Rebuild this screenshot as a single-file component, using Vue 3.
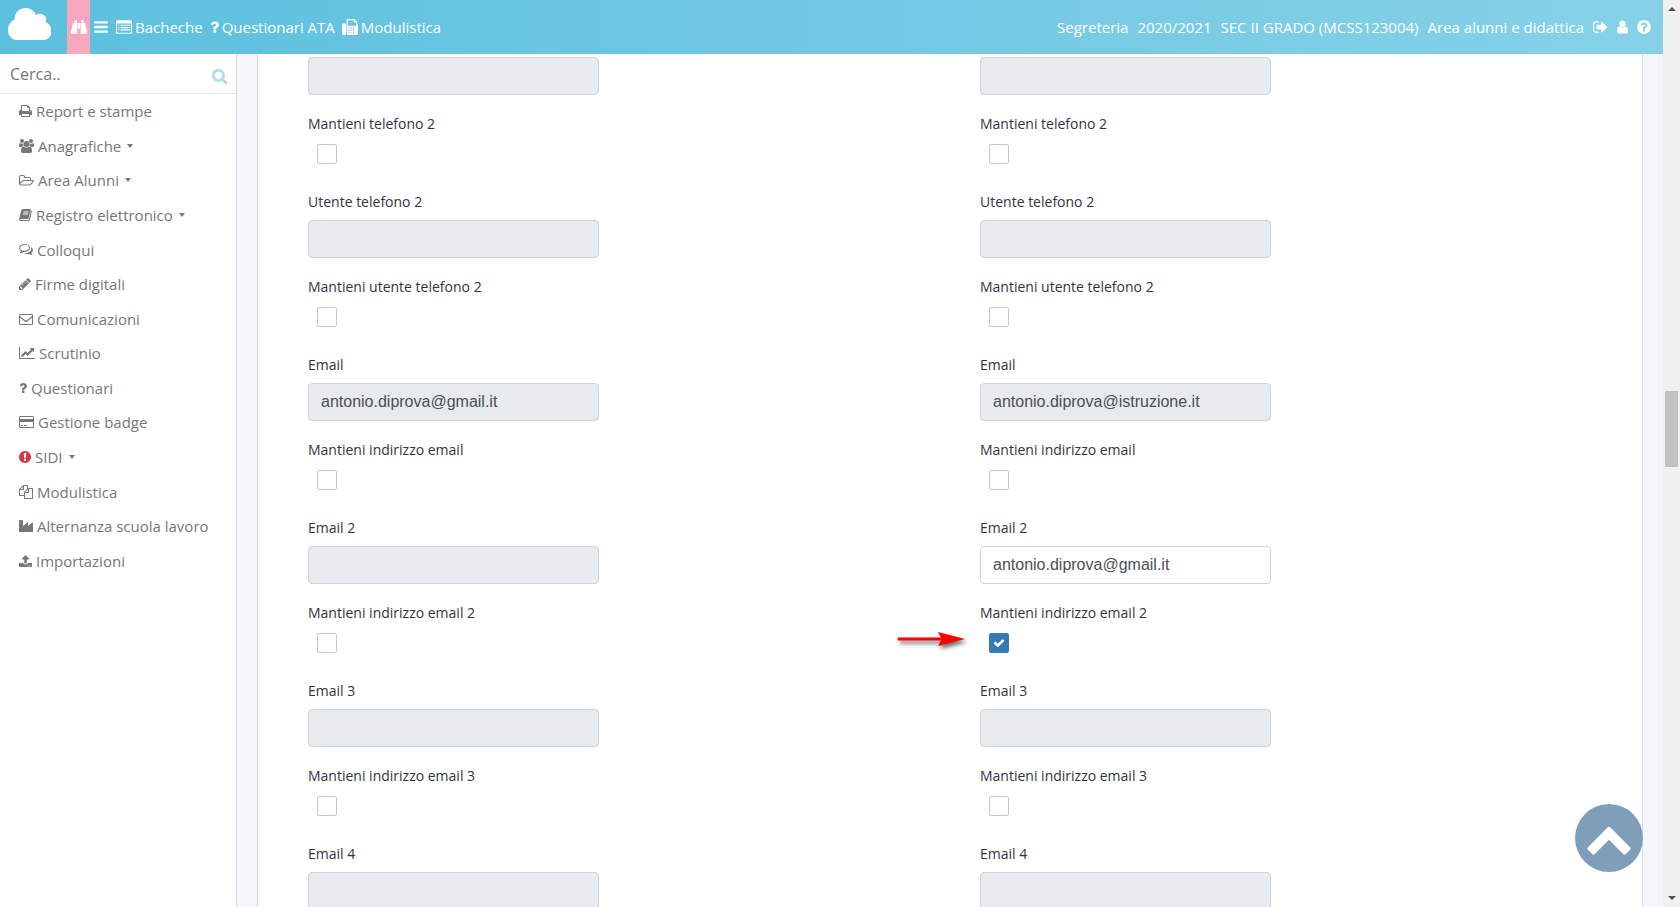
<template>
  <div class="app">
    <div class="page">
      <header class="topbar">
        <nav class="topbar-left">
          <a href="#" class="logo" aria-label="Home">
            <svg viewBox="0 0 43 32"><path d="M9 32C3.500 32 0 27.500 0 22C0 17 2.500 13.500 6.500 11.500C6.500 5 11 0 17.500 0C22 0 26 2.500 28 7C30 5.500 32.500 5.500 35 6.500C38 8 39 11 37.500 14C41 15.500 43.500 19 43.500 23C43.500 28 40 32 35 32Z" /></svg>
          </a>
          <button type="button" class="icon-button pink" aria-label="Cerca">
            <svg class="icon" :viewBox="icons.binoculars.box" :style="iconWidth('binoculars', 16)"><path :d="icons.binoculars.d" /></svg>
          </button>
          <button type="button" class="icon-button burger" aria-label="Menu">
            <svg class="icon" :viewBox="icons.bars.box" :style="iconWidth('bars', 16)"><path :d="icons.bars.d" /></svg>
          </button>
          <a v-for="link in topLinks" :key="link.text" href="#" class="top-link">
            <svg class="icon" :viewBox="icons[link.icon].box" :style="iconWidth(link.icon, 16)"><path fill-rule="evenodd" :d="icons[link.icon].d" /></svg>
            <span>{{ link.text }}</span>
          </a>
        </nav>
        <div class="topbar-right">
          <a v-for="item in session" :key="item" href="#">{{ item }}</a>
          <a v-for="item in sessionIcons" :key="item.icon" href="#" :aria-label="item.name">
            <svg class="icon" :viewBox="icons[item.icon].box" :style="iconWidth(item.icon, 16)"><path fill-rule="evenodd" :d="icons[item.icon].d" /></svg>
          </a>
        </div>
      </header>

      <div class="body">
        <aside class="sidebar">
          <form class="search" @submit.prevent>
            <input v-model="query" type="text" placeholder="Cerca.." aria-label="Cerca">
            <button type="submit" aria-label="Avvia ricerca">
              <svg class="icon" :viewBox="icons.search.box" :style="iconWidth('search', 16)"><path fill-rule="evenodd" :d="icons.search.d" /></svg>
            </button>
          </form>
          <ul class="menu">
            <li v-for="item in menu" :key="item.text">
              <a href="#">
                <svg class="icon" :class="{ alert: item.alert }" :viewBox="icons[item.icon].box" :style="iconWidth(item.icon, 14)"><path fill-rule="evenodd" :d="icons[item.icon].d" /></svg>
                <span>{{ item.text }}</span>
                <i v-if="item.open" class="caret"></i>
              </a>
            </li>
          </ul>
        </aside>

        <main class="content">
          <div class="card">
            <section v-for="(person, p) in people" :key="p" class="person">
              <div v-for="(field, i) in person" :key="field.label" class="field">
                <label v-if="i > 0" class="name" :for="`value-${p}-${i}`">{{ field.label }}</label>
                <input
                  :id="`value-${p}-${i}`"
                  v-model="field.value"
                  type="text"
                  class="form-control"
                  :aria-label="field.label"
                  :disabled="!field.keep"
                >
                <template v-if="field.keepLabel">
                  <label class="keep" :for="`keep-${p}-${i}`">{{ field.keepLabel }}</label>
                  <div class="check">
                    <input :id="`keep-${p}-${i}`" v-model="field.keep" type="checkbox">
                    <svg v-if="field.keep" class="tick" :viewBox="icons.check.box"><path :d="icons.check.d" /></svg>
                    <svg v-if="field.keep" class="arrow" viewBox="0 0 68 16"><path d="M1 6.500H44L41 1L68 8L41 15L44 9.500H1Q0 8 1 6.500Z" /></svg>
                  </div>
                </template>
              </div>
            </section>
          </div>
        </main>
      </div>

      <button type="button" class="to-top" aria-label="Torna su">
        <svg :viewBox="icons.chevronUp.box"><path :d="icons.chevronUp.d" /></svg>
      </button>
    </div>

    <div class="scrollbar">
      <i class="step up"></i>
      <div class="track">
        <div class="thumb"></div>
      </div>
      <i class="step down"></i>
    </div>
  </div>
</template>

<script setup>
import { ref } from 'vue'

const query = ref('')

const topLinks = [
  { icon: 'listAlt', text: 'Bacheche' },
  { icon: 'question', text: 'Questionari ATA' },
  { icon: 'fax', text: 'Modulistica' },
]

const session = ['Segreteria', '2020/2021', 'SEC II GRADO (MCSS123004)', 'Area alunni e didattica']

const sessionIcons = [
  { icon: 'signOut', name: 'Esci' },
  { icon: 'user', name: 'Profilo' },
  { icon: 'questionCircle', name: 'Aiuto' },
]

const menu = [
  { icon: 'print', text: 'Report e stampe' },
  { icon: 'users', text: 'Anagrafiche', open: true },
  { icon: 'folder', text: 'Area Alunni', open: true },
  { icon: 'book', text: 'Registro elettronico', open: true },
  { icon: 'comments', text: 'Colloqui' },
  { icon: 'pencil', text: 'Firme digitali' },
  { icon: 'envelope', text: 'Comunicazioni' },
  { icon: 'chart', text: 'Scrutinio' },
  { icon: 'question', text: 'Questionari' },
  { icon: 'card', text: 'Gestione badge' },
  { icon: 'exclamation', text: 'SIDI', open: true, alert: true },
  { icon: 'files', text: 'Modulistica' },
  { icon: 'industry', text: 'Alternanza scuola lavoro' },
  { icon: 'upload', text: 'Importazioni' },
]

function buildFields(values, kept) {
  return [
    ['Telefono 2', 'Mantieni telefono 2'],
    ['Utente telefono 2', 'Mantieni utente telefono 2'],
    ['Email', 'Mantieni indirizzo email'],
    ['Email 2', 'Mantieni indirizzo email 2'],
    ['Email 3', 'Mantieni indirizzo email 3'],
    ['Email 4', ''],
  ].map(([label, keepLabel]) => ({
    label,
    keepLabel,
    value: values[label] || '',
    keep: label === kept,
  }))
}

const people = ref([
  buildFields({ Email: 'antonio.diprova@gmail.it' }),
  buildFields({ Email: 'antonio.diprova@istruzione.it', 'Email 2': 'antonio.diprova@gmail.it' }, 'Email 2'),
])

// every glyph is drawn on an em of 1792 units, w is its own width
function glyph(w, d, x = 0) {
  return { w, d, box: `${x} 0 ${w} 1792` }
}

function iconWidth(name, size) {
  return { width: `${Math.round(icons[name].w / 1792 * size)}px`, height: `${size}px` }
}

const icons = {
  bars: glyph(1536, 'M1664 1344v128q0 26-19 45t-45 19h-1408q-26 0-45-19t-19-45v-128q0-26 19-45t45-19h1408q26 0 45 19t19 45zm0-512v128q0 26-19 45t-45 19h-1408q-26 0-45-19t-19-45v-128q0-26 19-45t45-19h1408q26 0 45 19t19 45zm0-512v128q0 26-19 45t-45 19h-1408q-26 0-45-19t-19-45v-128q0-26 19-45t45-19h1408q26 0 45 19t19 45z', 128),
  binoculars: glyph(1792, 'M704 448v1152q0 64-64 64h-576q-64 0-64-64v-256l208-800q24-96 112-96zM1088 448v1152q0 64 64 64h576q64 0 64-64v-256l-208-800q-24-96-112-96zM768 448h256v640h-256zM352 128h320v256h-320zM1120 128h320v256h-320z'),
  listAlt: glyph(1792, 'M160 128h1472q160 0 160 160v1216q0 160-160 160h-1472q-160 0-160-160v-1216q0-160 160-160zM128 512v992q0 32 32 32h1472q32 0 32-32v-992zM256 640h128v128h-128zM512 640h1024v128h-1024zM256 896h128v128h-128zM512 896h1024v128h-1024zM256 1152h128v128h-128zM512 1152h1024v128h-1024z'),
  fax: glyph(1792, 'M96 512h256q96 0 96 96v1056q0 128-128 128h-192q-128 0-128-128v-1056q0-96 96-96zM640 0h704q64 0 112 48l208 208q48 48 48 112v240q80 48 80 160v896q0 128-128 128h-1024q-128 0-128-128v-1536q0-128 128-128zM640 128v640h960v-384h-288v-256zM704 960v128h128v-128zM960 960v128h128v-128zM1216 960v128h128v-128zM704 1216v128h128v-128zM960 1216v128h128v-128zM1216 1216v128h128v-128zM704 1472v128h128v-128zM960 1472v128h128v-128zM1216 1472v128h128v-128z'),
  question: glyph(1024, 'M1088 1256v240q0 16-12 28t-28 12h-240q-16 0-28-12t-12-28v-240q0-16 12-28t28-12h240q16 0 28 12t12 28zm316-600q0 54-15.500 101t-35 76.500-55 59.500-57.500 43.500-61 35.500q-41 23-68.500 65t-27.500 67q0 17-12 32.500t-28 15.500h-240q-15 0-25.500-18.500t-10.500-37.500v-45q0-83 65-156.500t143-108.500q59-27 84-56t25-76q0-42-46.500-74t-107.500-32q-65 0-108 29-35 25-107 115-13 16-31 16-12 0-25-8l-164-125q-13-10-15.500-25t5.500-28q160-266 464-266 80 0 161 31t146 83 106 127.500 41 158.500z', 384),
  signOut: glyph(1664, 'M704 1440q0 4 1 20t.5 26.500-3 23.500-10 19.500-20.500 6.500h-320q-119 0-203.500-84.500t-84.500-203.500v-704q0-119 84.500-203.500t203.500-84.500h320q13 0 22.500 9.500t9.500 22.500q0 4 1 20t.5 26.500-3 23.500-10 19.500-20.500 6.500h-320q-66 0-113 47t-47 113v704q0 66 47 113t113 47h312l11.500 1 11.500 3 8 5.500 7 9 2 13.500zm928-544q0 26-19 45l-544 544q-19 19-45 19t-45-19-19-45v-288h-448q-26 0-45-19t-19-45v-384q0-26 19-45t45-19h448v-288q0-26 19-45t45-19 45 19l544 544q19 19 19 45z', 64),
  user: glyph(1280, 'M1536 1399q0 109-62.500 187t-150.500 78h-854q-88 0-150.500-78t-62.500-187q0-85 8.500-160.500t31.500-152 58.500-131 94-89 134.500-34.500q131 128 313 128t313-128q76 0 134.500 34.500t94 89 58.500 131 31.500 152 8.500 160.500zm-256-887q0 159-112.500 271.500t-271.500 112.500-271.500-112.500-112.500-271.500 112.500-271.500 271.500-112.500 271.500 112.500 112.500 271.500z', 256),
  questionCircle: glyph(1536, 'M1024 1376v-192q0-14-9-23t-23-9h-192q-14 0-23 9t-9 23v192q0 14 9 23t23 9h192q14 0 23-9t9-23zm256-672q0-88-55.500-163t-138.500-116-170-41q-243 0-371 213-15 24 8 42l132 100q7 6 19 6 16 0 25-12 53-68 86-92 34-24 86-24 48 0 85.500 26t37.500 59q0 38-20 61t-68 45q-63 28-115.500 86.500t-52.500 125.500v36q0 14 9 23t23 9h192q14 0 23-9t9-23q0-19 21.500-49.500t54.500-49.500q32-18 49-28.500t46-35 44.500-48 28-60.500 12.500-81zm384 192q0 209-103 385.500t-279.500 279.500-385.500 103-385.500-103-279.500-279.500-103-385.500 103-385.500 279.500-279.500 385.500-103 385.500 103 279.500 279.500 103 385.500z', 128),
  search: glyph(1664, 'M1216 832q0-185-131.500-316.500t-316.500-131.500-316.500 131.500-131.500 316.500 131.500 316.500 316.500 131.500 316.500-131.500 131.500-316.500zm512 832q0 52-38 90t-90 38q-54 0-90-38l-343-342q-179 124-399 124-143 0-273.500-55.500t-225-150-150-225-55.500-273.500 55.500-273.500 150-225 225-150 273.500-55.500 273.500 55.500 225 150 150 225 55.500 273.500q0 220-124 399l343 343q37 37 37 90z', 64),
  print: glyph(1664, 'M448 1536h896v-256h-896v256zm0-640h896v-384h-160q-40 0-68-28t-28-68v-160h-640v640zm1152 64q0-26-19-45t-45-19-45 19-19 45 19 45 45 19 45-19 19-45zm128 0v416q0 13-9.500 22.500t-22.500 9.500h-224v160q0 40-28 68t-68 28h-960q-40 0-68-28t-28-68v-160h-224q-13 0-22.500-9.500t-9.500-22.500v-416q0-79 56.500-135.500t135.500-56.500h64v-544q0-40 28-68t68-28h672q40 0 88 20t76 48l152 152q28 28 48 76t20 88v256h64q79 0 135.500 56.500t56.500 135.500z', 64),
  users: glyph(1920, 'M593 896q-162 5-265 128h-134q-82 0-138-40.500t-56-118.500q0-353 124-353 6 0 43.500 21t97.500 42.500 119 21.500q67 0 133-23-5 37-5 66 0 139 81 256zM1664 1533q0 120-73 189.500t-194 69.500h-874q-121 0-194-69.500t-73-189.500q0-53 3.500-103.500t14-109 26.500-108.500 43-97.500 62-81 85.500-53.500 111.500-20q10 0 43 21.500t73 48 107 48 135 21.500 135-21.500 107-48 73-48 43-21.500q61 0 111.500 20t85.500 53.500 62 81 43 97.500 26.500 108.500 14 109 3.500 103.500zM640 256a256 256 0 1 1-512 0a256 256 0 1 1 512 0zM1344 640a384 384 0 1 1-768 0a384 384 0 1 1 768 0zM1920 865q0 78-56 118.500t-138 40.500h-134q-103-123-265-128 81-117 81-256 0-29-5-66 66 23 133 23 59 0 119-21.500t97.500-42.500 43.500-21q124 0 124 353zM1792 256a256 256 0 1 1-512 0a256 256 0 1 1 512 0z'),
  folder: glyph(1920, 'M224 256h320q224 0 224 224v32h544q224 0 224 224v160h256q128 0 128 96 0 48-40 96l-336 400q-96 112-256 112h-1056q-232 0-232-224v-896q0-224 224-224zM128 1256l264-264q100-96 248-96h768v-160q0-96-96-96h-672v-160q0-96-96-96h-320q-96 0-96 96zM512 1068l-340 328q-44 76 60 76h1056q96 0 160-72l318-376h-1126q-76 0-128 44z'),
  book: glyph(1664, 'M480 128h944q112 0 72 136l-248 1008q-40 136-176 136h-832q-104 0-104 72 0 56 104 56h912q88 0 112-88l244-1016q24-80 4-136 176 48 120 228l-232 972q-48 168-224 168h-932q-160 0-216-144-48-120 32-320l208-864q48-208 212-208zM584 448l-32 128h640l32-128zM520 704l-32 128h640l32-128z'),
  comments: glyph(1792, 'M704 128q292 0 498 148t206 364-206 364-498 148q-92 0-176-14-152 108-352 136-48 0-60-36-8-32 24-64 88-88 108-156-248-152-248-378 0-216 206-364t498-148zM704 256q-240 0-408 112t-168 272q0 168 208 280l64 36-40 100q64-36 108-70l40-30q92 20 196 20 240 0 408-112t168-272-168-272-408-112zM1528 552q264 140 264 376 0 220-232 360 20 72 108 160 36 40 16 72-24 36-80 20-180-36-312-128-96 14-176 14-280 0-480-136 500 20 752-192 252-212 140-546z'),
  pencil: glyph(1536, 'M491 1536l91-91-235-235-91 91v107h128v128h107zm523-928q0-22-22-22-10 0-17 7l-542 542q-7 7-7 17 0 22 22 22 10 0 17-7l542-542q7-7 7-17zm-54-192l416 416-832 832h-416v-416zm683 96q0 53-37 90l-166 166-416-416 166-165q36-38 90-38 53 0 91 38l235 234q37 39 37 91z', 128),
  envelope: glyph(1792, 'M160 256h1472q160 0 160 160v1088q0 160-160 160h-1472q-160 0-160-160v-1088q0-160 160-160zM128 736v768q0 32 32 32h1472q32 0 32-32v-768l-512 420q-128 116-256 116t-256-116zM128 416q0 104 96 184l480 380q112 92 192 92t192-92l480-380q96-80 96-184 0-32-32-32h-1472q-32 0-32 32z'),
  chart: glyph(2048, 'M2048 1536v128h-2048v-1536h128v1408h1920zm-128-1248v435q0 21-19.500 29.500t-35.500-7.500l-121-121-633 633q-10 10-23 10t-23-10l-233-233-416 416-192-192 585-585q10-10 23-10t23 10l233 233 464-464-121-121q-16-16-7.500-35.500t29.500-19.500h435q14 0 23 9t9 23z'),
  card: glyph(1920, 'M160 128h1600q160 0 160 160v1216q0 160-160 160h-1600q-160 0-160-160v-1216q0-160 160-160zM160 256q-32 0-32 32v224h1664v-224q0-32-32-32zM128 896v608q0 32 32 32h1600q32 0 32-32v-608zM256 1280h256v128h-256zM640 1280h384v128h-384z'),
  exclamation: glyph(1536, 'M896 128q209 0 385.500 103t279.500 279.500 103 385.500-103 385.500-279.500 279.500-385.500 103-385.500-103-279.500-279.500-103-385.500 103-385.500 279.500-279.500 385.500-103zm128 1247v-190q0-14-9-23.500t-22-9.500h-192q-13 0-23 10t-10 23v190q0 13 10 23t23 10h192q13 0 22-9.500t9-23.500zm-2-344l18-621q0-12-10-18-10-8-24-8h-220q-14 0-24 8-10 6-10 18l17 621q0 10 10 17.500t24 7.500h185q14 0 23.500-7.500t10.500-17.500z', 128),
  files: glyph(1792, 'M1696 384q40 0 68 28t28 68v1216q0 40-28 68t-68 28h-960q-40 0-68-28t-28-68v-288h-544q-40 0-68-28t-28-68v-672q0-40 20-88t48-76l408-408q28-28 76-48t88-20h416q40 0 68 28t28 68v328q68-40 128-40zM1152 597l-299 299h299zM512 213l-299 299h299zM708 860l316-316v-416h-384v416q0 40-28 68t-68 28h-416v640h512v-256q0-40 20-88t48-76zM1664 1664v-1152h-384v416q0 40-28 68t-68 28h-416v640z'),
  industry: glyph(1792, 'M448 128q64 0 64 64v704l584-436q56-28 56 40v396l540-436q100-36 100 52v1152h-1792v-1472q0-64 64-64z'),
  upload: glyph(1664, 'M832 128l480 480q48 96-64 96h-256v448q0 64-64 64h-192q-64 0-64-64v-448h-256q-112 0-64-96zM96 1152h428q64 192 308 192t308-192h428q96 0 96 96v320q0 96-96 96h-1472q-96 0-96-96v-320q0-96 96-96zM1088 1472v128h128v-128zM1344 1472v128h128v-128z'),
  check: glyph(1792, 'M1671 566q0 40-28 68l-724 724-136 136q-28 28-68 28t-68-28l-136-136-362-362q-28-28-28-68t28-68l136-136q28-28 68-28t68 28l294 295 656-657q28-28 68-28t68 28l136 136q28 28 28 68z'),
  chevronUp: glyph(1792, 'M1683 1331l-166 165q-19 19-45 19t-45-19l-531-531-531 531q-19 19-45 19t-45-19l-166-165q-19-19-19-45.500t19-45.500l742-741q19-19 45-19t45 19l742 741q19 19 19 45.500t-19 45.500z'),
}
</script>

<style>
body {
  margin: 0;
  overflow: hidden;
}
</style>

<style scoped>
* {
  box-sizing: border-box;
}

.app {
  display: flex;
  height: 100vh;
  overflow: hidden;
  font-family: "Open Sans", "Noto Sans", sans-serif;
  font-size: 14px;
  color: #303442;
}

.page {
  flex: 1;
  min-width: 0;
  display: flex;
  flex-direction: column;
}

a {
  color: inherit;
  text-decoration: none;
}

button {
  padding: 0;
  border: none;
  background: none;
  color: inherit;
  cursor: pointer;
}

svg {
  display: block;
  fill: currentColor;
}

.icon {
  flex: none;
}

/* top bar */
.topbar {
  flex: none;
  height: 54px;
  display: flex;
  justify-content: space-between;
  background: linear-gradient(90deg, #5bc0de, #86d1e8);
  color: #fff;
  font-size: 15px;
  white-space: nowrap;
}

.topbar-left,
.topbar-right {
  display: flex;
  align-items: center;
}

.logo {
  margin: 0 16px 6px 8px;
}

.logo svg {
  width: 43px;
  height: 32px;
}

.pink {
  align-self: stretch;
  display: flex;
  align-items: center;
  width: 23px;
  justify-content: center;
  background: #f8a8be;
}

.burger {
  margin: 0 1px 0 4px;
}

.top-link {
  display: flex;
  align-items: center;
  gap: 3px;
  margin-left: 7px;
}

.topbar-right {
  gap: 9px;
  padding-right: 12px;
}

/* sidebar */
.body {
  flex: 1;
  min-height: 0;
  display: flex;
}

.sidebar {
  flex: none;
  width: 237px;
  border-right: 1px solid #d9dbde;
  background: #fff;
  color: #777;
}

.search {
  display: flex;
  align-items: center;
  height: 40px;
  padding: 0 9px 0 10px;
  border-bottom: 1px solid #e2e4e6;
}

.search input {
  flex: 1;
  min-width: 0;
  padding: 0;
  border: none;
  outline: none;
  font-family: inherit;
  font-size: 16px;
  color: #777;
}

.search input::placeholder {
  color: #777;
}

.search button {
  margin-top: 4px;
  color: #a9deee;
}

.search svg {
  stroke: currentColor;
  stroke-width: 60;
}

.menu {
  display: grid;
  grid-auto-rows: 1fr;
  height: 484px;
  margin: 0;
  padding: 0 0 0 19px;
  list-style: none;
  font-size: 15px;
}

.menu li,
.menu a {
  display: flex;
  align-items: center;
}

.menu a {
  gap: 4px;
}

.menu .alert {
  color: #dc3545;
}

.caret {
  margin-left: 2px;
  border: 3px solid transparent;
  border-top: 4px solid #777;
  border-bottom: 0;
}

/* form */
.content {
  flex: 1;
  min-width: 0;
  padding: 0 20px;
  background: #f5f6fb;
  overflow: hidden;
}

.card {
  display: flex;
  min-height: 100%;
  padding: 3px 20px 0;
  border: 1px solid #dcdee0;
  border-width: 0 1px;
  background: #fff;
}

.person {
  flex: 1;
  padding: 0 30px;
}

.field {
  padding-bottom: 27px;
}

.field label {
  display: block;
  line-height: 21px;
  font-weight: 500;
}

.name {
  margin-bottom: 8px;
}

.form-control {
  display: block;
  width: calc(50% - 15px);
  height: 38px;
  padding: 0 12px;
  border: 1px solid #ced4da;
  border-radius: 4px;
  background: #fff;
  font-family: "Liberation Sans", Arial, sans-serif;
  font-size: 16px;
  color: #495057;
}

.form-control:disabled {
  background: #e7ebee;
}

.keep {
  margin: 18px 0 10px;
}

.check {
  position: relative;
  width: 20px;
  height: 20px;
  margin-left: 9px;
}

.check input {
  appearance: none;
  display: block;
  width: 20px;
  height: 20px;
  margin: 0;
  border: 1px solid #c8c8c8;
  border-radius: 2px;
  background: #fff;
}

.check input:checked {
  border-color: #337ab7;
  background: #337ab7;
}

.tick {
  position: absolute;
  top: 4px;
  left: 4px;
  width: 12px;
  height: 12px;
  color: #fff;
  pointer-events: none;
}

.arrow {
  position: absolute;
  top: -2px;
  right: 44px;
  width: 68px;
  height: 16px;
  color: #f00;
  overflow: visible;
  filter: drop-shadow(2px 3px 2px rgba(0, 0, 0, 0.6));
}

.to-top {
  position: fixed;
  right: 37px;
  bottom: 35px;
  display: flex;
  align-items: center;
  justify-content: center;
  width: 68px;
  height: 68px;
  border-radius: 50%;
  background: #7f9fb9;
  color: #fff;
}

.to-top svg {
  width: 48px;
  height: 48px;
}

/* scrollbar */
.scrollbar {
  flex: none;
  display: flex;
  flex-direction: column;
  align-items: center;
  justify-content: space-between;
  width: 17px;
  padding: 7px 0;
  background: #f0f0f0;
}

.step {
  border: 4px solid transparent;
}

.up {
  border-top: 0;
  border-bottom-color: #505050;
}

.down {
  border-bottom: 0;
  border-top-color: #505050;
}

.track {
  flex: 1;
  display: flex;
  flex-direction: column;
  width: 13px;
}

.track::before {
  content: "";
  flex: 47;
}

.track::after {
  content: "";
  flex: 53;
}

.thumb {
  height: 76px;
  background: #c1c1c1;
}
</style>
